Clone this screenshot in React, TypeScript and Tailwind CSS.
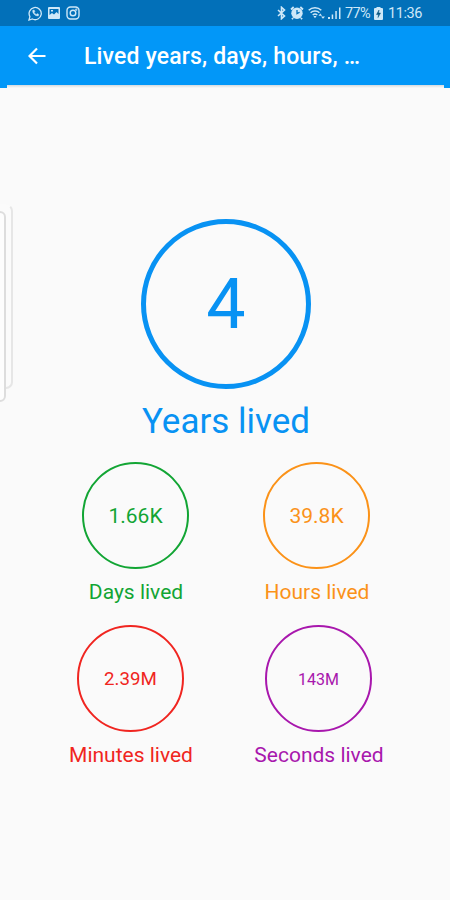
import React from "react";

type StatProps = {
  value: string;
  label: string;
  tone: string;
  valueSize: string;
};

function Stat({ value, label, tone, valueSize }: StatProps) {
  return (
    <div className={`flex w-[160px] flex-col items-center ${tone}`}>
      <div className="flex h-[107px] w-[107px] items-center justify-center rounded-full border-2 border-current">
        <span className={`pl-px pt-[2px] ${valueSize}`}>{value}</span>
      </div>
      <span className="mt-[10px] whitespace-nowrap pl-[2px] text-[21px] leading-[26px]">{label}</span>
    </div>
  );
}

function StatusBar() {
  return (
    <div className="flex h-[26px] items-center bg-[#0270b9] pl-[28px] pr-[27px] text-[#cfe8f8]">
      <svg width="15" height="15" viewBox="0 0 15 15" fill="none" stroke="currentColor">
        <path d="M1 14l.9-3.4A6.1 6.1 0 1 1 4.4 13z" strokeWidth="1.3" />
        <path d="M4.8 4.2c-.9 2.6 2.6 6.4 5.6 5.6l.4-1.4-1.7-.8-.8.8C7.300 8 6.500 7.200 6.200 6.400l.7-.8-.7-1.500z" fill="currentColor" strokeWidth=".4" />
      </svg>
      <svg className="ml-[5px]" width="12" height="12" viewBox="0 0 12 12">
        <path fillRule="evenodd" fill="currentColor" d="M1 0h10a1 1 0 0 1 1 1v10a1 1 0 0 1-1 1H1a1 1 0 0 1-1-1V1a1 1 0 0 1 1-1zM1.500 2v6l2.500-2 2 1.500L8.500 5l2 2V2zM3 3h2v1.500H3z" />
      </svg>
      <svg className="ml-[6px]" width="14" height="14" viewBox="0 0 14 14" fill="none" stroke="currentColor" strokeWidth="1.400">
        <rect x="1" y="1" width="12" height="12" rx="3.500" />
        <circle cx="7" cy="7" r="2.800" />
        <circle cx="10.300" cy="3.700" r=".4" />
      </svg>

      <svg className="ml-auto" width="10" height="14" viewBox="0 0 10 14" fill="none" stroke="currentColor" strokeWidth="1.600">
        <path d="M1 4l6.500 6-3 2.700V1.300L7.500 4 1 10" />
      </svg>
      <svg className="ml-[3px]" width="14" height="14" viewBox="0 0 14 14">
        <path d="M1 3.500L3.700 1M13 3.500L10.300 1M3 12l-1 1.300M11 12l1 1.300" stroke="currentColor" strokeWidth="1.800" />
        <circle cx="7" cy="7.300" r="5.700" fill="currentColor" />
        <path d="M7 4v3.600l2.600-1.400" fill="none" stroke="#0270b9" strokeWidth="1.300" />
      </svg>
      <svg className="ml-[4px]" width="18" height="14" viewBox="0 0 18 14" fill="none" stroke="currentColor" strokeWidth="1.500">
        <path d="M.7 4.200c3.500-3.300 9.100-3.300 12.600 0M2.600 6.700c2.400-2.200 6.400-2.200 8.800 0M4.700 9c1.300-1.100 3.300-1.100 4.600 0" />
        <path d="M5.400 10h3.200L7 12.200zM10.500 9.800L12.300 7.500l1.800 2.300zM13 10.500h4L15 12.800z" fill="currentColor" stroke="none" />
      </svg>
      <svg className="ml-[2px]" width="13" height="14" viewBox="0 0 13 14" fill="currentColor">
        <path d="M0 11h2v2H0zM3.700 8.500h1.500V13H3.700zM7.300 5h1.500v8H7.300zM11 1.500h1.500V13H11z" />
      </svg>
      <span className="ml-[4px] w-[25px] whitespace-nowrap pt-[2px] text-[14.5px] leading-[26px] tracking-[-0.700px]">77%</span>
      <svg className="ml-[4px]" width="9" height="13" viewBox="0 0 9 13">
        <path d="M2.500 0h4v1H8a1 1 0 0 1 1 1v10a1 1 0 0 1-1 1H1a1 1 0 0 1-1-1V2a1 1 0 0 1 1-1h1.500z" fill="currentColor" />
        <path d="M5 3L2.500 7.500h2L4 10.500 6.500 6h-2z" fill="#075580" stroke="#075580" strokeWidth=".5" />
      </svg>
      <span className="ml-[5px] w-[35px] whitespace-nowrap pt-[2px] text-[14.5px] leading-[26px] tracking-[-0.450px]">11:36</span>
    </div>
  );
}

export default function App() {
  return (
    <div className="relative h-[900px] w-[450px] overflow-hidden bg-[#fafafa] font-[Roboto,sans-serif]">
      <StatusBar />
      <header className="flex h-[59px] items-center bg-[#0297f8] pl-[28px] text-white">
        <svg width="18" height="18" viewBox="0 0 18 18" fill="none" stroke="currentColor" strokeWidth="2.200">
          <path d="M17.500 9H2M9 1.500L1.500 9 9 16.500" />
        </svg>
        <h1 className="ml-[38px] whitespace-nowrap pt-[2px] text-[23px] font-medium leading-[30px] tracking-[0.150px]">Lived years, days, hours, …</h1>
      </header>
      <div className="flex h-[3px] justify-between bg-gradient-to-b from-[#d5dade] to-[#fafafa]">
        <div className="w-[7px] bg-[#0297f8]" />
        <div className="w-[6px] bg-[#0297f8]" />
      </div>

      <main>
        <section className="flex flex-col items-center pl-[2px] pt-[131px] text-[#0892f3]">
          <div className="flex h-[170px] w-[170px] items-center justify-center rounded-full border-[5px] border-current">
            <span className="text-[70px] leading-none">4</span>
          </div>
          <span className="mt-[12px] whitespace-nowrap text-[35px] leading-[42px]">Years lived</span>
        </section>
        <section className="mt-[19px] flex gap-[21px] pl-[55px]">
          <Stat value="1.66K" label="Days lived" tone="text-[#12a534]" valueSize="text-[21px]" />
          <Stat value="39.8K" label="Hours lived" tone="text-[#fb9218]" valueSize="text-[21px]" />
        </section>
        <section className="mt-[20px] flex gap-[28px] pl-[50px]">
          <Stat value="2.39M" label="Minutes lived" tone="text-[#f02520]" valueSize="text-[18.7px]" />
          <Stat value="143M" label="Seconds lived" tone="text-[#a817ad]" valueSize="text-[16px]" />
        </section>
      </main>

      <div className="absolute left-[-10px] top-[204px] h-[185px] w-[23px] rounded-[7px] border-2 border-t-transparent border-[#e6e6e6] bg-[#fbfbfb]" />
      <div className="absolute left-[-10px] top-[211px] h-[191px] w-[16px] rounded-[6px] border-2 border-[#dddddd] bg-[#fdfdfd]" />
    </div>
  );
}
